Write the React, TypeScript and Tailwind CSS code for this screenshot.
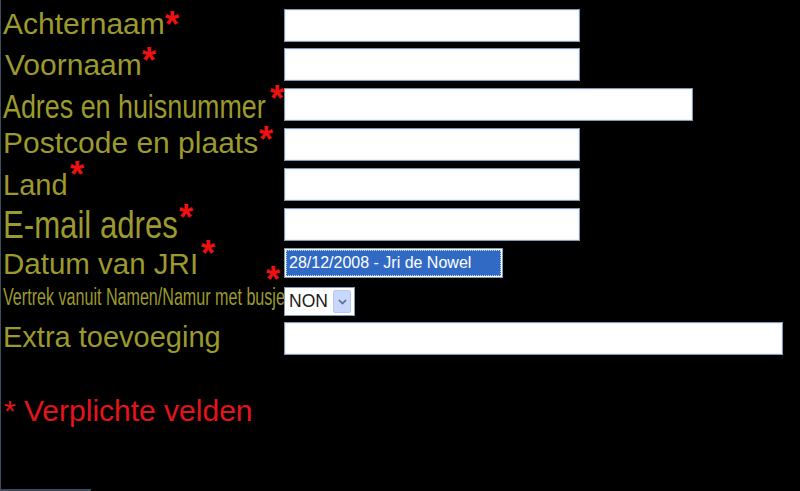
import React from 'react';

type Row = {
  label: string;
  rowClass: string;
  labelClass: string;
  star?: string;
  field: React.ReactNode;
};

const textInput = (w: string) => (
  <div className={`h-[33px] ${w} bg-white border border-[#7f9db9] shadow-[inset_0_0_0_1px_#eef2f8]`} />
);

const rows: Row[] = [
  {
    label: 'Achternaam',
    rowClass: 'h-[39px]',
    labelClass: 'text-[30px] mt-0',
    star: 'left-[164px] top-[9px]',
    field: textInput('w-[296px]'),
  },
  {
    label: 'Voornaam',
    rowClass: 'h-[40px]',
    labelClass: 'text-[30px] mt-[2px] pl-[2px]',
    star: 'left-[141px] top-[6px]',
    field: textInput('w-[296px]'),
  },
  {
    label: 'Adres en huisnummer',
    rowClass: 'h-[40px]',
    labelClass: 'text-[34px] mt-[1px] scale-x-[0.79]',
    star: 'left-[269px] top-[4px]',
    field: textInput('w-[409px]'),
  },
  {
    label: 'Postcode en plaats',
    rowClass: 'h-[40px]',
    labelClass: 'text-[30px] mt-0',
    star: 'left-[258px] top-[5px]',
    field: textInput('w-[296px]'),
  },
  {
    label: 'Land',
    rowClass: 'h-[40px]',
    labelClass: 'text-[29px] mt-[3px]',
    star: 'left-[69px] top-0',
    field: textInput('w-[296px]'),
  },
  {
    label: 'E-mail adres',
    rowClass: 'h-[40px]',
    labelClass: 'text-[38px] -mt-[2px] scale-x-[0.82]',
    star: 'left-[178px] top-[3px]',
    field: textInput('w-[296px]'),
  },
  {
    label: 'Datum van JRI',
    rowClass: 'h-[39px]',
    labelClass: 'text-[29.5px] mt-[1px]',
    star: 'left-[200px] -top-[1px]',
    field: (
      <div className="h-[30px] w-[219px] border border-[#7f9db9] bg-white p-px">
        <div className="h-full w-full bg-[#316ac5] border border-dotted border-[#c9d8f2] flex items-center pl-[2px] text-[16px] leading-none text-white">
          28/12/2008 - Jri de Nowel
        </div>
      </div>
    ),
  },
  {
    label: 'Vertrek vanuit Namen/Namur met busje',
    rowClass: 'h-[35px]',
    labelClass: 'text-[23px] -mt-[1px] scale-x-[0.7]',
    star: 'left-[265px] -top-[14px]',
    field: (
      <div className="h-[29px] w-[71px] border border-[#7f9db9] bg-white flex items-center justify-between pl-[4px] pr-[3px]">
        <span className="text-[17.5px] leading-none text-[#1a1a1a]">NON</span>
        <span className="h-[23px] w-[18px] rounded-[2px] bg-[#c8d7fb] border border-[#b7c9f0] flex items-center justify-center">
          <svg width="9" height="6" viewBox="0 0 9 6">
            <path d="M1 1 L4.5 4.5 L8 1" fill="none" stroke="#56698c" strokeWidth="1.6" />
          </svg>
        </span>
      </div>
    ),
  },
  {
    label: 'Extra toevoeging',
    rowClass: 'h-[33px]',
    labelClass: 'text-[29px] mt-[1px]',
    field: textInput('w-[499px]'),
  },
];

export default function App() {
  return (
    <div
      className="h-[491px] w-[800px] bg-black flex overflow-hidden"
      style={{ fontFamily: '"Liberation Sans", Arial, sans-serif' }}
    >
      <div className="w-px bg-[#3f4d63] shrink-0" />
      <div className="flex-1 flex flex-col pt-[9px]">
        {rows.map((r) => (
          <div key={r.label} className={`relative flex items-start ${r.rowClass}`}>
            <div className="w-[283px] shrink-0 pl-[2px]">
              <span className={`inline-block origin-left leading-none whitespace-nowrap text-[#9c9a2c] ${r.labelClass}`}>
                {r.label}
              </span>
            </div>
            {r.field}
            {r.star && (
              <span className={`absolute text-[36px] font-bold leading-[14px] text-[#ee1111] ${r.star}`}>*</span>
            )}
          </div>
        ))}

        <div className="mt-[41px] pl-[3px] text-[30px] leading-none whitespace-nowrap text-[#e3141a]">* Verplichte velden</div>

        <div className="mt-auto h-[2px] w-[90px] bg-[#3c4a60]" />
      </div>
    </div>
  );
}
